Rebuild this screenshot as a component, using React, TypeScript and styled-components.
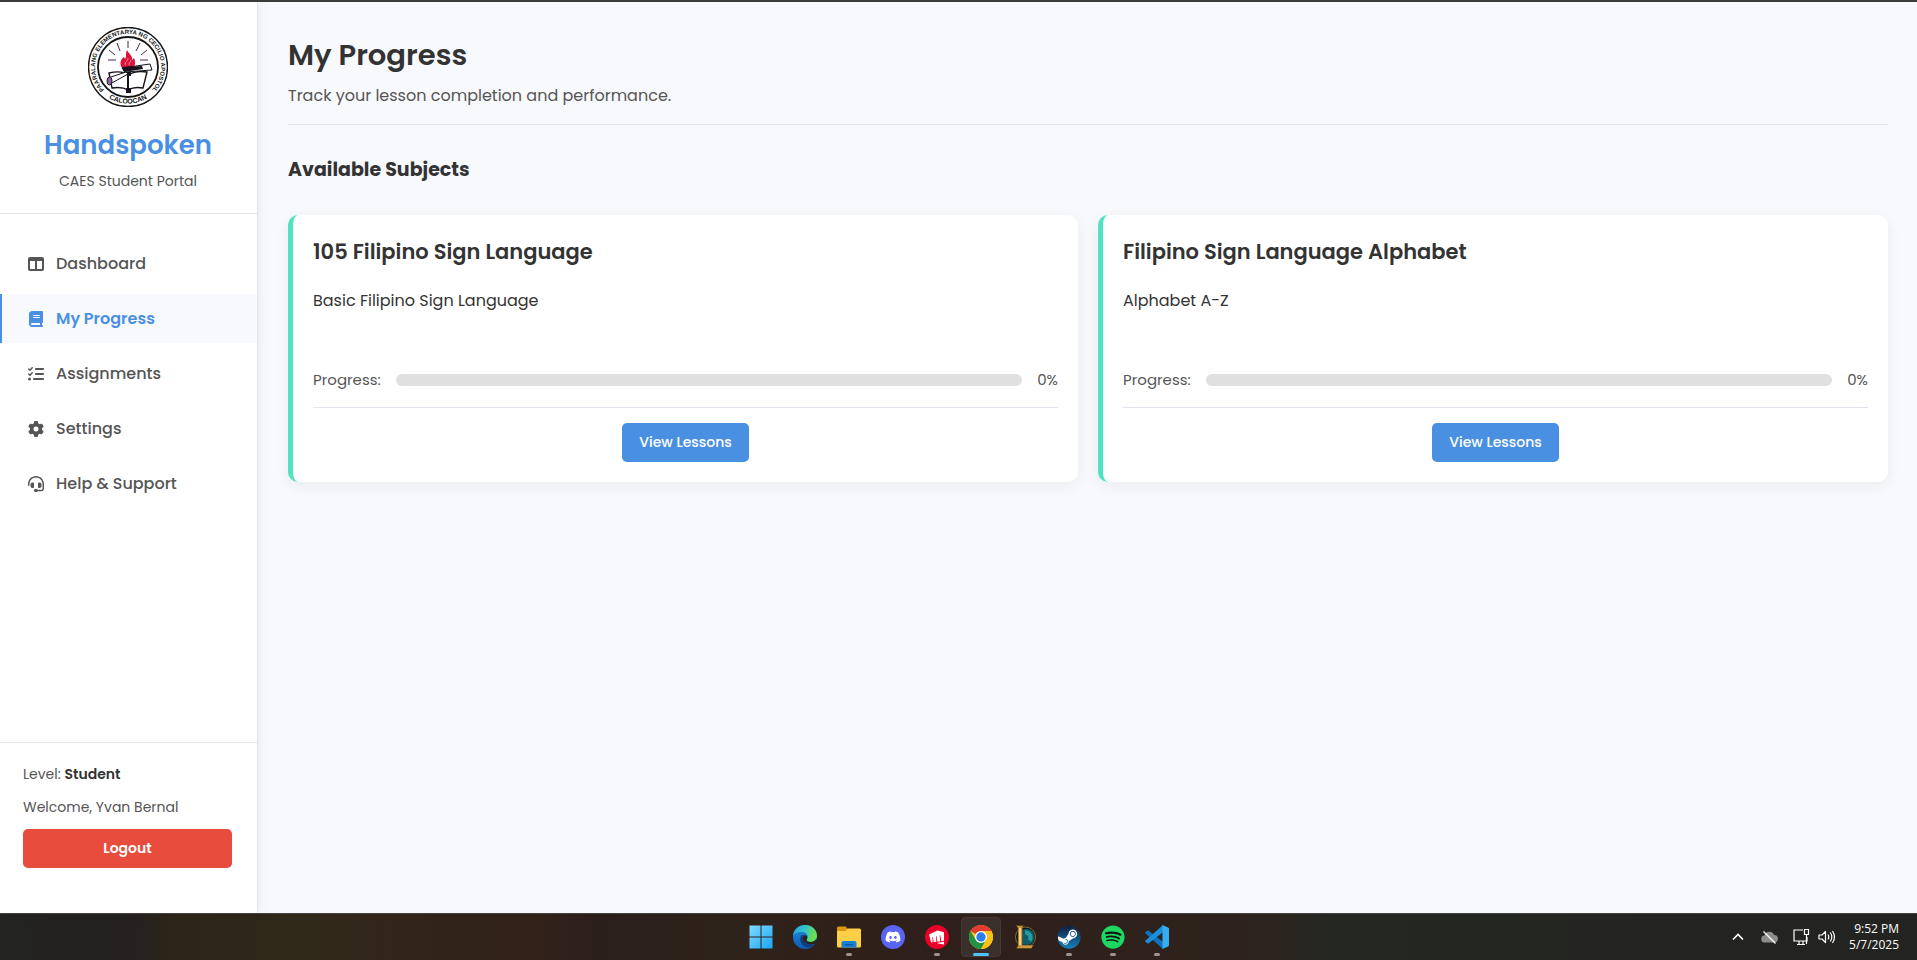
import React from "react";
import styled, { createGlobalStyle } from "styled-components";
import { FaTableColumns, FaBook, FaListCheck, FaGear, FaHeadset, FaDiscord, FaSpotify, FaSteam } from "react-icons/fa6";
import { SiRiotgames } from "react-icons/si";

const Global = createGlobalStyle`
  *, *::before, *::after { box-sizing: border-box; }
  body { margin: 0; background: #f8f9fd; color: #333; font-family: Poppins, Inter, "Open Sans", sans-serif; font-size: 16px; }
  h1, h2, h3, p { margin: 0; }
  button { font-family: inherit; cursor: pointer; }
`;

const Screen = styled.div`
  min-height: 100vh;
  display: flex;
  flex-direction: column;
  border-top: 2px solid #3b3b3b;
`;
const Portal = styled.div`
  flex: 1;
  display: flex;
`;

const Sidebar = styled.aside`
  flex: 0 0 258px;
  display: flex;
  flex-direction: column;
  background: #fff;
  border-right: 1px solid #e0e4ec;
  box-shadow: 2px 0 10px rgba(0, 0, 0, 0.06);
  z-index: 1;
`;
const Brand = styled.header`
  display: flex;
  flex-direction: column;
  align-items: center;
  padding: 25px 21px 21px 20px;
  border-bottom: 1px solid #e0e4ec;
`;
const BrandName = styled.div`
  margin-top: 20px;
  font-size: 26px;
  line-height: 36px;
  font-weight: 600;
  color: #4a90e2;
`;
const BrandNote = styled.p`
  margin-top: 7px;
  font-size: 14px;
  line-height: 22px;
  color: #555;
`;
const Nav = styled.nav`
  flex: 1;
  display: flex;
  flex-direction: column;
  gap: 6px;
  padding: 25px 0;
`;
const NavLink = styled.a<{ $active?: boolean }>`
  display: flex;
  align-items: center;
  gap: 10px;
  height: 49px;
  padding: 0 24px;
  border-left: 2px solid ${(p) => (p.$active ? "#4a90e2" : "transparent")};
  background: ${(p) => (p.$active ? "#f8f9fd" : "transparent")};
  color: ${(p) => (p.$active ? "#4a90e2" : "#555")};
  font-weight: ${(p) => (p.$active ? 600 : 500)};
  line-height: 24px;
  text-decoration: none;
  svg { width: 20px; height: 16px; }
`;
const Account = styled.footer`
  display: flex;
  flex-direction: column;
  gap: 11px;
  padding: 20px 25px 45px 23px;
  border-top: 1px solid #e0e4ec;
  font-size: 14px;
  line-height: 22px;
  color: #555;
  strong { color: #333; font-weight: 600; }
`;
const Button = styled.button<{ $danger?: boolean }>`
  height: 39px;
  padding: 0 17px 2px;
  border: 0;
  border-radius: 5px;
  background: ${(p) => (p.$danger ? "#e74c3c" : "#4a90e2")};
  color: #fff;
  font-size: 14px;
  line-height: 22px;
  font-weight: ${(p) => (p.$danger ? 600 : 500)};
`;

const Main = styled.main`
  flex: 1;
  min-width: 0;
  padding: 30px 29px 30px 30px;
`;
const PageHead = styled.header`
  padding-bottom: 15px;
  border-bottom: 1px solid #e0e4ec;
`;
const PageTitle = styled.h1`
  font-size: 29px;
  line-height: 46px;
  font-weight: 600;
`;
const PageNote = styled.p`
  margin-top: 5px;
  line-height: 26px;
  color: #555;
`;
const SectionTitle = styled.h2`
  margin: 30px 0;
  font-size: 19px;
  line-height: 30px;
  font-weight: 700;
`;
const Cards = styled.div`
  display: grid;
  grid-template-columns: repeat(auto-fit, minmax(400px, 1fr));
  gap: 20px;
`;
const Card = styled.article`
  padding: 20px;
  background: #fff;
  border-left: 5px solid #50e3c2;
  border-radius: 10px;
  box-shadow: 0 4px 15px rgba(0, 0, 0, 0.06);
`;
const CardTitle = styled.h3`
  font-size: 21px;
  line-height: 34px;
  font-weight: 600;
`;
const CardText = styled.p`
  min-height: 60px;
  margin-top: 19px;
  line-height: 26px;
`;
const ProgressRow = styled.div`
  display: flex;
  align-items: center;
  gap: 15px;
  margin-top: 20px;
  font-size: 15px;
  line-height: 24px;
  color: #555;
`;
const Track = styled.div`
  flex: 1;
  height: 12px;
  border-radius: 6px;
  background: #e0e0e0;
  overflow: hidden;
`;
const Fill = styled.div`
  height: 100%;
  background: #50e3c2;
`;
const CardActions = styled.div`
  display: flex;
  justify-content: center;
  margin-top: 15px;
  padding-top: 15px;
  border-top: 1px solid #e0e4ec;
`;

const Taskbar = styled.footer`
  display: grid;
  grid-template-columns: 1fr auto 1fr;
  align-items: center;
  height: 47px;
  border-top: 1px solid #45423f;
  background: linear-gradient(90deg, #232321 0, #242120 7%, #2c2519 9%, #2f2919 16%, #32241a 21%, #32221a 28%, #2b1f1c 31%, #2e231a 38%, #30201a 44%, #2f1f1b 50%, #2f211b 60%, #2c241d 66%, #252722 69%, #242622 78%, #232321 100%);
`;
const Apps = styled.div`
  grid-column: 2;
  display: flex;
  gap: 4px;
`;
const AppButton = styled.button<{ $state?: "open" | "active" }>`
  position: relative;
  display: grid;
  place-items: center;
  width: 40px;
  height: 40px;
  padding: 0;
  border: 1px solid ${(p) => (p.$state === "active" ? "#443934" : "transparent")};
  border-radius: 4px;
  background: ${(p) => (p.$state === "active" ? "#3a2f2a" : "transparent")};
  &::after {
    content: "";
    position: absolute;
    bottom: 0;
    width: ${(p) => (p.$state === "active" ? 16 : p.$state ? 6 : 0)}px;
    height: 3px;
    border-radius: 2px;
    background: ${(p) => (p.$state === "active" ? "#4cc2ff" : "#9c948f")};
  }
`;
const Tray = styled.div`
  grid-column: 3;
  justify-self: end;
  display: flex;
  align-items: center;
  padding-right: 18px;
  color: #fff;
`;
const TrayIcons = styled.div`
  display: flex;
  align-items: center;
  gap: 4px;
  margin-right: 13px;
`;
const Clock = styled.div`
  font-family: "Open Sans", "Noto Sans", sans-serif;
  font-size: 12px;
  line-height: 16px;
  text-align: right;
`;

const Seal = () => (
  <svg width="80" height="80" viewBox="0 0 80 80" role="img" aria-label="School seal">
    <defs>
      <path id="sealTop" d="M16.500 63A33 33 0 1 1 63.500 63" />
      <path id="sealBottom" d="M14 66A37 37 0 0 0 66 66" />
    </defs>
    <circle cx="40" cy="40" r="39.500" fill="#fff" stroke="#161616" strokeWidth="1.400" />
    <circle cx="40" cy="40" r="30" fill="none" stroke="#161616" strokeWidth="1.800" />
    <g fontFamily="Liberation Sans, sans-serif" fontWeight="700" fill="#151515">
      <text fontSize="6.100"><textPath href="#sealTop" startOffset="50%" textAnchor="middle">PAARALANG ELEMENTARYA NG CECILIO APOSTOL</textPath></text>
      <text fontSize="7"><textPath href="#sealBottom" startOffset="50%" textAnchor="middle">CALOOCAN</textPath></text>
    </g>
    <path d="M40 21V14M32 24l-3-8M27 28l-6-5M28 33H20M48 24l4-8M53 28l6-5M52 33h8" stroke="#4a2440" fill="none" />
    <path d="M34 41c-3-5-1-9 2-11l1 2c2-3 0-5 2-9 2 4 6 6 5 10l2-2c2 4 1 8-1 10z" fill="#dc1439" />
    <path d="M37 38c0-4 3-3 3-7M41 38c0-3 2-3 2-5" stroke="#f58aa0" fill="none" />
    <path d="M21 46l3 15c6-1 11-1 16 2 5-3 10-3 15-2l4-16c-7-1-13-1-18 3-6-4-12-4-20-2z" fill="#fff" stroke="#18121b" strokeWidth="1.400" />
    <path d="M40 47v16" stroke="#18121b" strokeWidth="2" />
    <path d="M34 41l28-4 2 6-27 2z" fill="#fff" stroke="#18121b" />
    <path d="M34 40l20-1 1 3-19 3zM38 45h5v4h-4zM38 61h5v5h-5z" fill="#18121b" />
    <path d="M20 51l18-6 2 2-18 10z" fill="#fff" stroke="#18121b" />
    <ellipse cx="21.500" cy="54" rx="2.500" ry="4" fill="#8a6796" stroke="#2b1732" />
  </svg>
);

const WindowsIcon = () => (
  <svg width="24" height="24" viewBox="0 0 24 24">
    <defs><linearGradient id="win" x2="1" y2="1" gradientUnits="objectBoundingBox"><stop stopColor="#7fdcff" /><stop offset="1" stopColor="#1ba5f5" /></linearGradient></defs>
    <path d="M.5.500h11v11H.500zM12.500.500h11v11h-11zM.5 12.500h11v11H.500zM12.500 12.500h11v11h-11z" fill="url(#win)" />
  </svg>
);
const EdgeIcon = () => (
  <svg width="24" height="24" viewBox="0 0 24 24">
    <defs>
      <linearGradient id="edgeTop" x1="0" x2="1" y2=".3"><stop stopColor="#249ddd" /><stop offset=".5" stopColor="#31c4cf" /><stop offset="1" stopColor="#6be04d" /></linearGradient>
      <linearGradient id="edgeBody" x2="0" y2="1"><stop stopColor="#1c8fdc" /><stop offset="1" stopColor="#0f5bb5" /></linearGradient>
    </defs>
    <circle cx="12" cy="12" r="12" fill="url(#edgeBody)" />
    <path d="M0 11C.5 4.500 5.500 0 12 0c7 0 12 5 12 10.500 0 4-3 6.500-6.500 6.500-2.500 0-4-1-4-2 0-.8 1.200-1.300 1.200-3.200C14.700 9 12 7 8.500 7 4 7 1 9 0 11z" fill="url(#edgeTop)" />
    <path d="M9 10c-3 3-2.500 9 3.500 12 3.500 1.500 7.500 0 10-3.500-6 3-12.500 0-12.500-5 0-1.500.5-2.500 1.500-3.500z" fill="#0c3f82" />
    <path d="M13.500 15c0 1 1.500 2 4 2 3 0 5-1.500 6-3.500.3 2-.2 4-1.500 5.200C16 21 10 18 10 13.500c0-1.500.6-2.500 1.600-3.300 2 .2 3.200 1.500 2.600 3z" fill="#2c201b" />
  </svg>
);
const FolderIcon = () => (
  <svg width="24" height="24" viewBox="0 0 24 24">
    <path d="M0 3a1.500 1.500 0 0 1 1.500-1.500h7L11 4v4H0z" fill="#dc9a10" />
    <path d="M0 6h8.500L11 3.500h11.500A1.500 1.500 0 0 1 24 5v16a1.500 1.500 0 0 1-1.500 1.500h-21A1.500 1.500 0 0 1 0 21z" fill="#ffcf45" />
    <path d="M4.500 22.500V18a2 2 0 0 1 2-2h11a2 2 0 0 1 2 2v4.500z" fill="#1580d4" />
    <path d="M8 19h8v1.500H8z" fill="#0b5ca8" />
  </svg>
);
const Disc = styled.span<{ $color: string }>`
  display: grid;
  place-items: center;
  width: 24px;
  height: 24px;
  border-radius: 50%;
  background: ${(p) => p.$color};
  color: #fff;
`;
const ChromeIcon = () => (
  <svg width="24" height="24" viewBox="0 0 24 24">
    <circle cx="12" cy="12" r="12" fill="#fbc116" />
    <path d="M12 12L1.600 6A12 12 0 0 1 22.400 6H12z" fill="#e33b2e" />
    <path d="M1.600 6A12 12 0 0 0 12 24l5.200-9L12 12 6.800 15z" fill="#229342" />
    <path d="M22.400 6H12v6l5.200 3L12 24A12 12 0 0 0 22.400 6z" fill="#fbc116" />
    <circle cx="12" cy="12" r="6" fill="#fff" />
    <circle cx="12" cy="12" r="4.700" fill="#2f7de9" />
  </svg>
);
const LeagueIcon = () => (
  <svg width="24" height="24" viewBox="0 0 24 24">
    <circle cx="12.500" cy="12" r="10" fill="#07161c" stroke="#8c6c31" />
    <circle cx="13.500" cy="12" r="8" fill="#0b5f6c" />
    <path d="M12 7.500a5 5 0 0 1 4.500 8" stroke="#2a9a9f" strokeWidth="4" fill="none" />
    <path d="M3 .500h7.500L9.500 3v17h11l-2 3.500H3l2-2.500V3z" fill="#c9993f" stroke="#4c3613" strokeWidth=".6" />
    <path d="M6 3h2v17H6z" fill="#f0d28b" />
  </svg>
);
const SteamIcon = () => (
  <svg width="24" height="24" viewBox="0 0 24 24">
    <defs><linearGradient id="steam" x2="0" y2="1"><stop stopColor="#101a3e" /><stop offset="1" stopColor="#1583bd" /></linearGradient></defs>
    <circle cx="12" cy="12" r="11" fill="#fff" />
    <FaSteam size={24} fill="url(#steam)" />
  </svg>
);
const SpotifyIcon = () => (
  <svg width="24" height="24" viewBox="0 0 24 24">
    <circle cx="12" cy="12" r="11" fill="#111" />
    <FaSpotify size={24} color="#1ed760" />
  </svg>
);
const CodeIcon = () => (
  <svg width="24" height="24" viewBox="0 0 24 24">
    <path d="M.6 6.900L3 5.200l15 11.600V24L.6 8.600a1.200 1.200 0 0 1 0-1.700z" fill="#0f72bb" />
    <path d="M.6 17.100L3 18.800 18 7.200V0L.6 15.400a1.200 1.200 0 0 0 0 1.700z" fill="#1c8fdc" />
    <path d="M17.500.100L23 2.500a1.500 1.500 0 0 1 1 1.500v16a1.500 1.500 0 0 1-1 1.500l-5.500 2.400z" fill="#33adf3" />
  </svg>
);

const apps: { name: string; icon: React.ReactNode; state?: "open" | "active" }[] = [
  { name: "Start", icon: <WindowsIcon /> },
  { name: "Edge", icon: <EdgeIcon /> },
  { name: "File Explorer", icon: <FolderIcon />, state: "open" },
  { name: "Discord", icon: <Disc $color="#5865f2"><FaDiscord size={16} /></Disc> },
  { name: "Riot Client", icon: <Disc $color="#eb0029"><SiRiotgames size={15} /></Disc>, state: "open" },
  { name: "Chrome", icon: <ChromeIcon />, state: "active" },
  { name: "League of Legends", icon: <LeagueIcon /> },
  { name: "Steam", icon: <SteamIcon />, state: "open" },
  { name: "Spotify", icon: <SpotifyIcon />, state: "open" },
  { name: "Visual Studio Code", icon: <CodeIcon />, state: "open" },
];

const links = [
  { label: "Dashboard", Icon: FaTableColumns },
  { label: "My Progress", Icon: FaBook, active: true },
  { label: "Assignments", Icon: FaListCheck },
  { label: "Settings", Icon: FaGear },
  { label: "Help & Support", Icon: FaHeadset },
];

const subjects = [
  { title: "105 Filipino Sign Language", text: "Basic Filipino Sign Language", progress: 0 },
  { title: "Filipino Sign Language Alphabet", text: "Alphabet A-Z", progress: 0 },
];

export default function App() {
  return (
    <Screen>
      <Global />
      <Portal>
        <Sidebar>
          <Brand>
            <Seal />
            <BrandName>Handspoken</BrandName>
            <BrandNote>CAES Student Portal</BrandNote>
          </Brand>
          <Nav>
            {links.map(({ label, Icon, active }) => (
              <NavLink key={label} href="#" $active={active} aria-current={active ? "page" : undefined}>
                <Icon />
                {label}
              </NavLink>
            ))}
          </Nav>
          <Account>
            <p>Level: <strong>Student</strong></p>
            <p>Welcome, Yvan Bernal</p>
            <Button $danger>Logout</Button>
          </Account>
        </Sidebar>
        <Main>
          <PageHead>
            <PageTitle>My Progress</PageTitle>
            <PageNote>Track your lesson completion and performance.</PageNote>
          </PageHead>
          <SectionTitle>Available Subjects</SectionTitle>
          <Cards>
            {subjects.map((s) => (
              <Card key={s.title}>
                <CardTitle>{s.title}</CardTitle>
                <CardText>{s.text}</CardText>
                <ProgressRow>
                  <span>Progress:</span>
                  <Track role="progressbar" aria-label={s.title} aria-valuenow={s.progress}>
                    <Fill style={{ width: `${s.progress}%` }} />
                  </Track>
                  <span>{s.progress}%</span>
                </ProgressRow>
                <CardActions>
                  <Button>View Lessons</Button>
                </CardActions>
              </Card>
            ))}
          </Cards>
        </Main>
      </Portal>
      <Taskbar>
        <Apps>
          {apps.map((a) => (
            <AppButton key={a.name} aria-label={a.name} $state={a.state}>{a.icon}</AppButton>
          ))}
        </Apps>
        <Tray>
          <TrayIcons>
            <svg width="28" height="16" viewBox="0 0 16 16" fill="none" stroke="#fff" strokeWidth="1.600"><path d="M3 10.500L8 5.500l5 5" /></svg>
            <svg width="28" height="16" viewBox="0 0 18 16"><path d="M4 13.500a3.500 3.500 0 0 1-.5-7A5 5 0 0 1 13 6a3.800 3.800 0 0 1 1 7.500z" fill="#8d8d8b" /><path d="M2.500 2.500l12 12" stroke="#fff" strokeWidth="1.200" /></svg>
            <svg width="26" height="18" viewBox="0 0 16 18" fill="none" stroke="#fff" strokeWidth="1.200"><path d="M10 2H1v11h13V9M4 16.500h8M6 13v3M10 13v3M11.500 1.500h4v5h-4zM13.500 6.500V16" /></svg>
            <svg width="18" height="16" viewBox="0 0 18 16" fill="none" stroke="#fff" strokeWidth="1.200" strokeLinejoin="round"><path d="M1 6v4h3l3.500 3.500v-11L4 6zM10 5.500q1.500 2.500 0 5M12.300 3.500q3 4.500 0 9M14.500 2q4 6 0 12" /></svg>
          </TrayIcons>
          <Clock>
            <div>9:52 PM</div>
            <div>5/7/2025</div>
          </Clock>
        </Tray>
      </Taskbar>
    </Screen>
  );
}
